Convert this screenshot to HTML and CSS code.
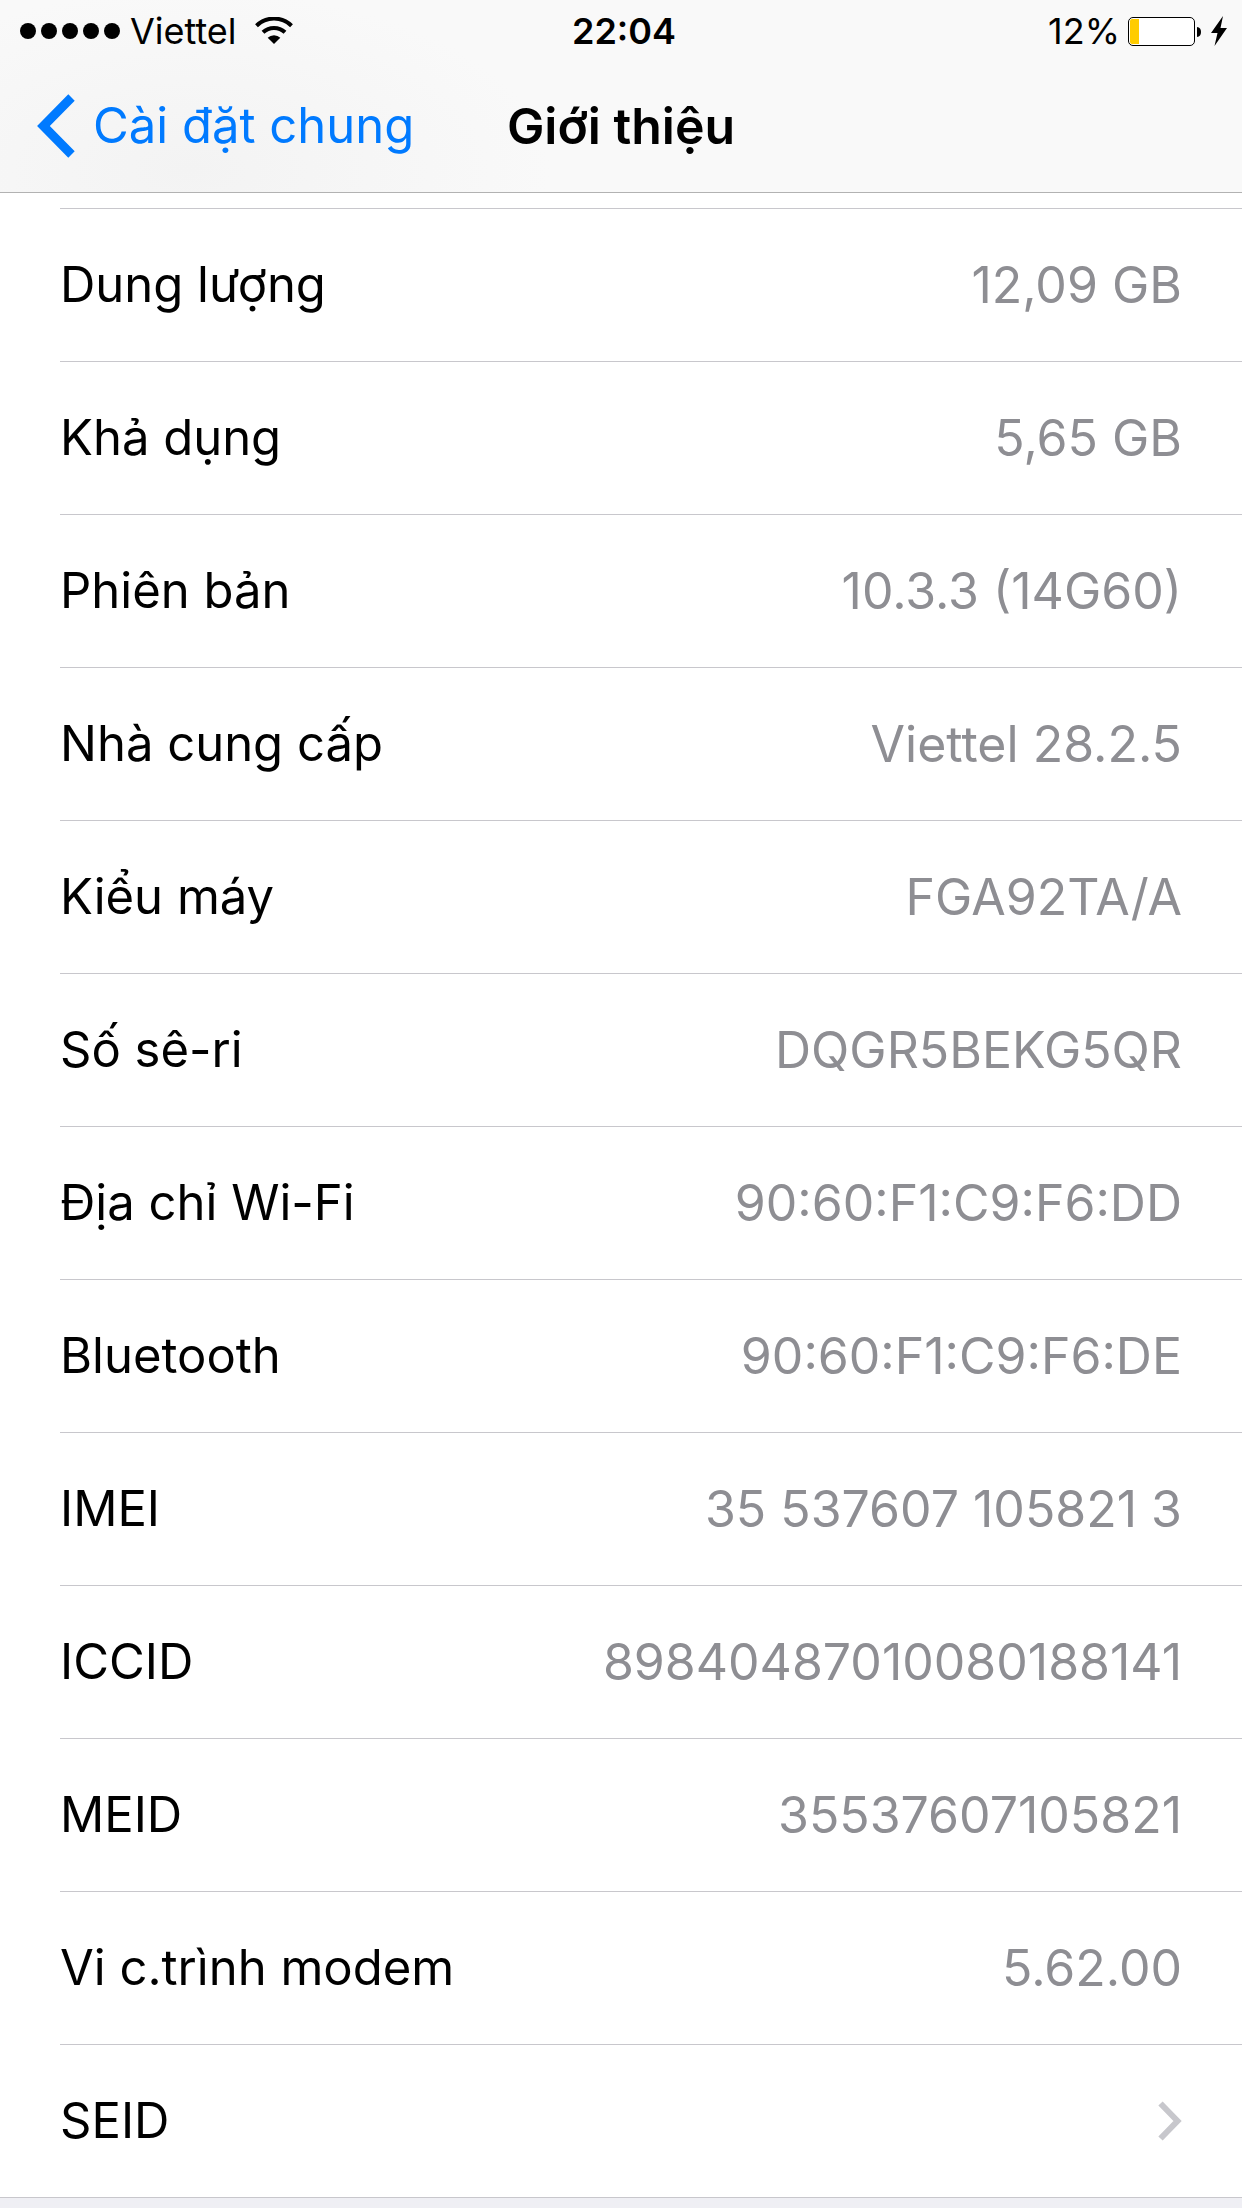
FILE: index.html
```html
<!DOCTYPE html>
<html lang="vi">
<head>
    <meta charset="UTF-8">
    <meta name="viewport" content="width=device-width, initial-scale=1.0">
    <title>Giới thiệu</title>
    <link rel="stylesheet" href="styles.css">
</head>
<body>
    <header class="header">
        <div class="status-bar">
            <div class="status-left">
                <div class="signal">
                    <span class="dot"></span>
                    <span class="dot"></span>
                    <span class="dot"></span>
                    <span class="dot"></span>
                    <span class="dot"></span>
                </div>
                <span class="carrier">Viettel</span>
                <svg class="wifi" width="38" height="28" viewBox="0 0 38 28" aria-hidden="true">
                    <path d="M1.5 8.7 A25 25 0 0 1 36.5 8.7" fill="none" stroke="#000" stroke-width="4"/>
                    <path d="M8 15.3 A16 16 0 0 1 30 15.3" fill="none" stroke="#000" stroke-width="4"/>
                    <path d="M19 27 L12.7 20.7 A9 9 0 0 1 25.3 20.7 Z"/>
                </svg>
            </div>
            <span class="clock">22:04</span>
            <div class="status-right">
                <span>12%</span>
                <svg class="battery" width="74" height="29" viewBox="0 0 74 29" aria-hidden="true">
                    <rect x="0.5" y="0.5" width="66" height="28" rx="4.5" fill="#fff" stroke="#000"/>
                    <path d="M4 2 H11 V27 H4 Q2 27 2 25 V4 Q2 2 4 2 Z" fill="#ffcc00"/>
                    <path d="M69 10 Q73 10.5 73 15 Q73 19.5 69 20 Z"/>
                </svg>
                <svg class="bolt" width="17" height="30" viewBox="0 0 17 30" aria-hidden="true">
                    <path d="M12 0 L0 17 L6.5 17 L3.5 30 L16 12 L9.5 12 Z"/>
                </svg>
            </div>
        </div>
        <nav class="nav-bar">
            <a href="#" class="back">
                <svg width="38" height="64" viewBox="0 0 38 64" aria-hidden="true">
                    <path d="M34.5 3.5 L6.4 32 L34.5 60.5" fill="none" stroke="#007aff" stroke-width="9"/>
                </svg>
                <span>Cài đặt chung</span>
            </a>
            <h1 class="title">Giới thiệu</h1>
        </nav>
    </header>

    <main class="list">
        <div class="row row-cut"></div>
        <dl class="rows">
            <div class="row">
                <dt>Dung lượng</dt>
                <dd>12,09 GB</dd>
            </div>
            <div class="row">
                <dt>Khả dụng</dt>
                <dd>5,65 GB</dd>
            </div>
            <div class="row">
                <dt>Phiên bản</dt>
                <dd>10.3.3 (14G60)</dd>
            </div>
            <div class="row">
                <dt>Nhà cung cấp</dt>
                <dd>Viettel 28.2.5</dd>
            </div>
            <div class="row">
                <dt>Kiểu máy</dt>
                <dd>FGA92TA/A</dd>
            </div>
            <div class="row">
                <dt>Số sê-ri</dt>
                <dd>DQGR5BEKG5QR</dd>
            </div>
            <div class="row">
                <dt>Địa chỉ Wi-Fi</dt>
                <dd>90:60:F1:C9:F6:DD</dd>
            </div>
            <div class="row">
                <dt>Bluetooth</dt>
                <dd>90:60:F1:C9:F6:DE</dd>
            </div>
            <div class="row">
                <dt>IMEI</dt>
                <dd>35 537607 105821 3</dd>
            </div>
            <div class="row">
                <dt>ICCID</dt>
                <dd>89840487010080188141</dd>
            </div>
            <div class="row">
                <dt>MEID</dt>
                <dd>35537607105821</dd>
            </div>
            <div class="row">
                <dt>Vi c.trình modem</dt>
                <dd>5.62.00</dd>
            </div>
        </dl>
        <a href="#" class="row row-link">
            <span>SEID</span>
            <svg width="24" height="40" viewBox="0 0 24 40" aria-hidden="true">
                <path d="M2.5 2.5 L19.5 20 L2.5 37.5" fill="none" stroke="#c7c7cc" stroke-width="6"/>
            </svg>
        </a>
    </main>
</body>
</html>
```

FILE: styles.css
```css
* {
    box-sizing: border-box;
}

body {
    margin: 0;
    font-family: Inter, 'Liberation Sans', sans-serif;
    font-size: 49px;
    line-height: 60px;
    color: #000;
    background-color: #efeff4;
}

a {
    color: inherit;
    text-decoration: none;
}

.header {
    background: radial-gradient(ellipse 360px 180px at 190px 170px, #f3f3f3, #f9f9f9);
    border-bottom: 1px solid #b2b2b2;
}

/* status bar */
.status-bar {
    display: grid;
    grid-template-columns: 1fr auto 1fr;
    align-items: center;
    height: 62px;
    padding: 0 14px 0 20px;
    font-size: 36px;
    line-height: 44px;
}

.status-left, .status-right {
    display: flex;
    align-items: center;
}

.status-right {
    justify-content: flex-end;
}

.signal {
    display: flex;
    gap: 5px;
    margin-right: 10px;
}

.dot {
    width: 16px;
    height: 16px;
    border-radius: 50%;
    background-color: #000;
}

.wifi {
    margin-left: 18px;
}

.clock {
    font-weight: 600;
}

.battery {
    margin: 0 9px 0 8px;
}

/* navigation bar */
.nav-bar {
    display: grid;
    grid-template-columns: 1fr auto 1fr;
    align-items: center;
    height: 130px;
    padding: 0 37px 2px;
}

.back {
    display: flex;
    align-items: center;
    gap: 18px;
    color: #007aff;
}

.title {
    margin: 0;
    font-size: 50px;
    font-weight: 600;
}

/* list */
.list {
    padding-left: 60px;
    background-color: #fff;
    border-bottom: 1px solid #c8c7cc;
}

.rows {
    margin: 0;
}

.row {
    display: flex;
    justify-content: space-between;
    align-items: center;
    height: 153px;
    padding-right: 60px;
    border-bottom: 1px solid #c8c7cc;
}

.row-cut {
    height: 16px;
}

.row-link {
    height: 152px;
    border-bottom: none;
}

dd {
    margin: 0;
    font-size: 50px;
    color: #8e8e93;
}
```
